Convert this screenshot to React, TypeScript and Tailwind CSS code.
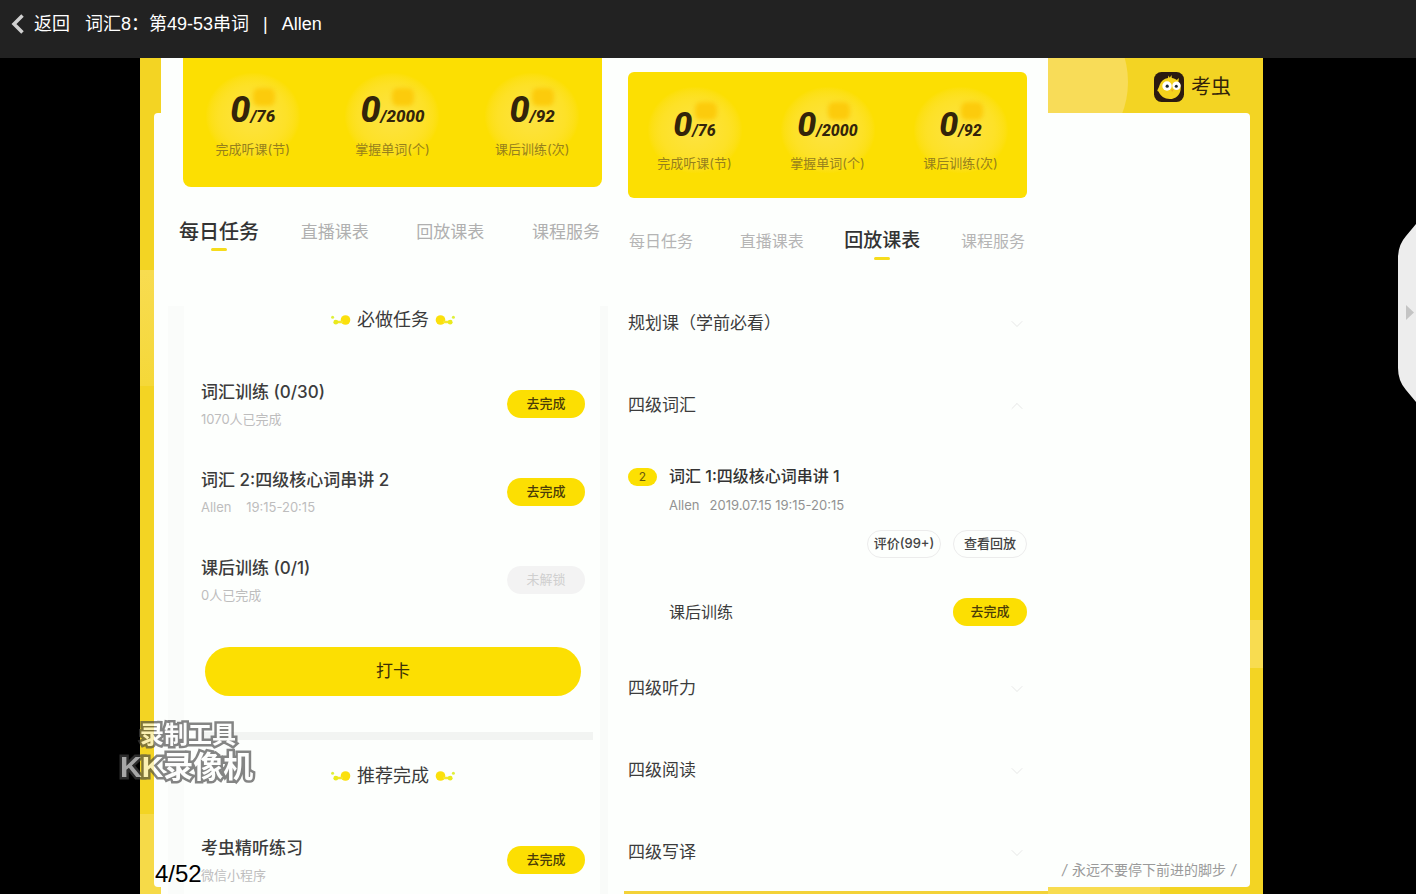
import { ChevronDown, ChevronUp } from 'lucide-react'

// ─── Data ─────────────────────────────────────────────────────────────────────

const TABS = ['每日任务', '直播课表', '回放课表', '课程服务']

const STATS = [
  { total: '/76', label: '完成听课(节)' },
  { total: '/2000', label: '掌握单词(个)' },
  { total: '/92', label: '课后训练(次)' },
]

interface Task {
  title: string
  note: string
  action: string
  locked?: boolean
}

const TASKS: Task[] = [
  { title: '词汇训练 (0/30)', note: '1070人已完成', action: '去完成' },
  { title: '词汇 2:四级核心词串讲 2', note: 'Allen    19:15-20:15', action: '去完成' },
  { title: '课后训练 (0/1)', note: '0人已完成', action: '未解锁', locked: true },
]

const EXTRA_TASK: Task = { title: '考虫精听练习', note: '微信小程序', action: '去完成' }

// ─── Icons ────────────────────────────────────────────────────────────────────

function Sparks({ flip = false }: { flip?: boolean }) {
  return (
    <svg
      viewBox="0 0 20 12"
      className={flip ? 'h-3 w-5 -scale-x-100' : 'h-3 w-5'}
      aria-hidden="true"
    >
      <circle cx="14.500" cy="6" r="4.800" fill="#fbe00c" />
      <path d="M5 8h7" stroke="#f6e62c" strokeWidth="2.500" />
      <circle cx="4.800" cy="8.200" r="2.400" fill="#e9ea1c" />
      <circle cx="1.600" cy="3.200" r="1.500" fill="#dff03a" />
    </svg>
  )
}

function BugLogo() {
  return (
    <svg viewBox="0 0 30 30" className="h-[30px] w-[30px]" aria-hidden="true">
      <rect width="30" height="30" rx="7.500" fill="#2b1a10" />
      <path
        d="M4.500 19.500c-1 0-1.500-1-.8-2 .9-1.500 1.400-3 2-4.800C7 9 10 6.600 14 6l.4-2.500 1.400 2.300L17.500 3l.3 3c2 .3 3.600 1 4.900 2.100L25 6l-.6 3.700c1.600 2 2.500 4.500 2.300 7.200C26.300 22.600 21.700 27 15.800 27 10.500 27 6.300 24 4.500 19.500z"
        fill="#f5d31c"
      />
      <circle cx="13" cy="14" r="4.700" fill="#fff" />
      <circle cx="22.500" cy="13.800" r="4.200" fill="#fff" />
      <circle cx="13.200" cy="14.200" r="1.600" fill="#1c2733" />
      <circle cx="22.300" cy="14.200" r="1.500" fill="#1c2733" />
      <path d="M17 17.500h2.500L18.200 20z" fill="#eda51c" />
    </svg>
  )
}

// ─── Shared pieces ────────────────────────────────────────────────────────────

function StatsCard({ compact = false }: { compact?: boolean }) {
  return (
    <div
      className={
        compact
          ? 'ml-5 mr-[21px] mt-[14px] h-[126px] rounded-md bg-[#fcdf02] pt-[34px]'
          : 'ml-[22px] mr-1.5 h-[129px] rounded-b-lg bg-[#fcdf02] pt-[34px]'
      }
    >
      <dl className="grid grid-cols-3 text-center">
        {STATS.map((s) => (
          <div key={s.label} className="relative flex flex-col-reverse gap-1">
            <div className="absolute -top-5 left-1/2 h-[88px] w-24 -translate-x-1/2 rounded-full bg-radial from-[#fde341] via-[#fde127] to-[#fcdf02] to-70%" />
            <div className="absolute -top-1 left-1/2 h-[18px] w-[22px] rounded-md bg-[#fccb0c] blur-[2px]" />
            <dt className="relative text-[13px] leading-5 text-[#96801c]">{s.label}</dt>
            <dd className="relative font-[Roboto] font-extrabold italic leading-9 text-[#33240a]">
              <span className={compact ? 'text-[34px]' : 'text-[36px]'}>0</span>
              <span className={compact ? 'text-[16px]' : 'text-[17px]'}>{s.total}</span>
            </dd>
          </div>
        ))}
      </dl>
    </div>
  )
}

function TabBar({ active, compact = false }: { active: string; compact?: boolean }) {
  return (
    <nav
      className={
        compact
          ? 'ml-[21px] mr-[23px] mt-[29px] flex justify-between'
          : 'ml-6 mr-2 mt-[31px] flex justify-between'
      }
    >
      {TABS.map((tab) => {
        const on = tab === active
        return (
          <button
            key={tab}
            type="button"
            className={
              compact
                ? 'flex w-16 flex-col items-center gap-0.5 whitespace-nowrap'
                : 'flex w-[68px] flex-col items-center gap-0.5 whitespace-nowrap'
            }
          >
            <span
              className={
                on
                  ? compact
                    ? 'text-[19px] font-medium leading-7 text-[#333]'
                    : 'text-[20px] font-medium leading-7 text-[#333]'
                  : compact
                    ? 'text-[16px] leading-7 text-[#b5b5b5]'
                    : 'text-[17px] leading-7 text-[#b0b0b0]'
              }
            >
              {tab}
            </span>
            {on && <span className="h-[3px] w-4 rounded-full bg-[#f6dc1c]" />}
          </button>
        )
      })}
    </nav>
  )
}

function SectionTitle({ children }: { children: string }) {
  return (
    <h2 className="flex items-center justify-center gap-1.5 text-[18px] leading-7 text-[#3a3a3a]">
      <Sparks />
      {children}
      <Sparks flip />
    </h2>
  )
}

function TaskRow({ task }: { task: Task }) {
  return (
    <li className="flex h-[88px] items-center justify-between">
      <div>
        <p className="text-[17px] font-medium leading-6 text-[#3c3c3c]">{task.title}</p>
        <p className="mt-[5px] whitespace-pre text-[13px] leading-5 text-[#bdbdbd]">{task.note}</p>
      </div>
      <button
        type="button"
        disabled={task.locked}
        className={
          task.locked
            ? 'h-7 w-[78px] rounded-full bg-[#f3f3f3] text-[13px] text-[#cfcfcf]'
            : 'h-7 w-[78px] rounded-full bg-[#fcdf02] text-[13px] font-medium text-[#4a3c08]'
        }
      >
        {task.action}
      </button>
    </li>
  )
}

function UnitRow({ title, open = false }: { title: string; open?: boolean }) {
  const Icon = open ? ChevronUp : ChevronDown
  return (
    <button
      type="button"
      className="flex h-[82px] w-full items-center justify-between text-left text-[17px] text-[#3c3c3c]"
    >
      {title}
      <Icon className="h-5 w-5 text-[#e2e2e2]" strokeWidth={1} />
    </button>
  )
}

// ─── Phone screens ────────────────────────────────────────────────────────────

function DailyScreen() {
  return (
    <section className="min-w-0 overflow-hidden bg-[#fdfffd]">
      <StatsCard />
      <TabBar active="每日任务" />
      <div className="mt-[55px] flex">
        <div className="ml-[7px] w-4 bg-[#fafcfa]" />
        <div className="flex-1 pl-[17px] pr-[15px]">
          <SectionTitle>必做任务</SectionTitle>
          <ul className="mt-[26px]">
            {TASKS.map((t) => (
              <TaskRow key={t.title} task={t} />
            ))}
          </ul>
          <button
            type="button"
            className="mx-1 mt-[23px] block h-[49px] w-[calc(100%-8px)] rounded-full bg-[#fcdf02] text-[17px] text-[#3a2f08]"
          >
            打卡
          </button>
          <div className="-mr-2 mt-9 h-2 bg-[#f2f4f2]" />
          <div className="mt-[22px]">
            <SectionTitle>推荐完成</SectionTitle>
          </div>
          <ul className="mt-[26px]">
            <TaskRow task={EXTRA_TASK} />
          </ul>
        </div>
        <div className="w-2 bg-[#f9fbf9]" />
      </div>
    </section>
  )
}

function ReplayScreen() {
  return (
    <section className="flex min-h-0 min-w-0 flex-col bg-[#fdfffd]">
      <div className="min-h-0 flex-1 overflow-hidden">
        <StatsCard compact />
        <TabBar active="回放课表" compact />
        <div className="ml-5 mr-[21px] mt-[23px]">
          <UnitRow title="规划课（学前必看）" />
          <UnitRow title="四级词汇" open />
          <div className="mt-[17px] flex items-start">
            <span className="mt-1 h-[18px] w-[29px] rounded-full bg-[#fce002] text-center text-[12px] leading-[18px] text-[#6b5a0c]">
              2
            </span>
            <div className="ml-3 flex-1">
              <p className="text-[16px] font-medium leading-6 text-[#333]">
                词汇 1:四级核心词串讲 1
              </p>
              <p className="mt-[7px] flex gap-2.5 text-[13px] leading-5 text-[#929292]">
                <span>Allen</span>
                <span>2019.07.15 19:15-20:15</span>
              </p>
              <div className="mt-[15px] flex justify-end gap-3 text-[13px] font-medium text-[#444]">
                <button type="button" className="h-7 w-[74px] rounded-full border border-[#ececec]">
                  评价(99+)
                </button>
                <button type="button" className="h-7 w-[74px] rounded-full border border-[#ececec]">
                  查看回放
                </button>
              </div>
              <div className="mt-10 flex items-center justify-between">
                <p className="text-[16px] text-[#3c3c3c]">课后训练</p>
                <button
                  type="button"
                  className="h-7 w-[74px] rounded-full bg-[#fcdf02] text-[13px] font-medium text-[#4a3c08]"
                >
                  去完成
                </button>
              </div>
            </div>
          </div>
          <div className="mt-[22px]">
            <UnitRow title="四级听力" />
            <UnitRow title="四级阅读" />
            <UnitRow title="四级写译" />
          </div>
        </div>
      </div>
      <div className="ml-4 h-[3px] bg-[#f3d238]" />
    </section>
  )
}

// ─── App ──────────────────────────────────────────────────────────────────────

export default function App() {
  return (
    <div className="flex h-screen flex-col overflow-hidden bg-black font-[Inter,'Noto_Sans_CJK_SC',sans-serif]">
      <header className="flex h-[58px] shrink-0 items-start bg-[#222] pl-2.5 pt-3 font-['Liberation_Sans','Noto_Sans_CJK_SC',sans-serif] text-[18px] leading-6 text-white">
        <a href="#back" className="flex items-center gap-2.5">
          <svg viewBox="0 0 14 20" className="h-5 w-3.5" aria-hidden="true">
            <path d="M12.500 1.500 4 10l8.500 8.500" fill="none" stroke="#d0d0d0" strokeWidth="3.500" />
          </svg>
          返回
        </a>
        <h1 className="ml-[15px] flex gap-3.5">
          词汇8：第49-53串词
          <span>|</span>
          <span>Allen</span>
        </h1>
      </header>

      <main className="relative min-h-0 flex-1 pl-[140px] pr-[153px]">
        <div className="relative grid h-full grid-cols-1 grid-rows-[minmax(0,1fr)] overflow-hidden bg-[#f3d423]">
          {/* lighter patches of the slide background */}
          <div className="absolute left-0 top-[212px] h-[116px] w-3.5 bg-linear-to-b from-[#f8dc50] to-[#f5d838]" />
          <div className="absolute bottom-0 left-0 h-20 w-6 bg-[#f6da48]" />
          <div className="absolute -top-16 right-[135px] h-44 w-44 rounded-full bg-[#f8dc58]" />
          <div className="absolute right-0 top-[562px] h-12 w-3.5 bg-[#f8dc50]" />
          <div className="absolute bottom-0 right-[103px] h-2 w-28 bg-[#f8dc50]" />

          <div className="relative mb-[7px] ml-3.5 mr-[13px] mt-[55px] rounded bg-[#fdfffd] [grid-area:1/1]" />

          <div className="relative grid grid-cols-[447fr_440fr_215fr] grid-rows-[minmax(0,1fr)] pl-[21px] [grid-area:1/1]">
            <DailyScreen />
            <ReplayScreen />
            <aside className="flex flex-col justify-between">
              <div className="flex h-[57px] items-center justify-end gap-[7px] pr-8 text-[20px] text-[#33240a]">
                <BugLogo />
                考虫
              </div>
              <p className="flex justify-end gap-[5px] pb-3.5 pr-[27px] text-[14px] leading-5 text-[#9a9a9a]">
                <span className="italic">/</span>
                永远不要停下前进的脚步
                <span className="italic">/</span>
              </p>
            </aside>
          </div>
        </div>

        {/* recorder watermark */}
        <div className="absolute bottom-[111px] left-[120px] whitespace-nowrap font-['Liberation_Sans','Noto_Sans_CJK_SC',sans-serif] font-bold text-white opacity-65 [-webkit-text-stroke:5px_#444] [paint-order:stroke_fill]">
          <p className="pl-5 text-[24px] leading-8">录制工具</p>
          <p className="text-[30px] leading-8">KK录像机</p>
        </div>

        <p className="absolute bottom-1.5 left-[155px] font-['Liberation_Sans',sans-serif] text-[24px] leading-7 text-black">
          4/52
        </p>

        <button type="button" aria-label="展开" className="absolute right-0 top-[166px]">
          <svg viewBox="0 0 18 178" className="h-[178px] w-[18px]">
            <path d="M18 0 8 12Q0 21 0 34v110q0 13 8 22l10 12z" fill="#ededed" />
            <path d="M8 81v15l8-7.500z" fill="#c4c4c4" />
          </svg>
        </button>
      </main>
    </div>
  )
}
